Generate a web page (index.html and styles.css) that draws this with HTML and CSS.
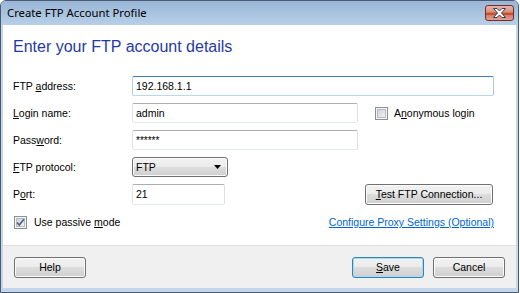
FILE: index.html
```html
<!DOCTYPE html>
<html lang="en">
<head>
<meta charset="utf-8">
<title>Create FTP Account Profile</title>
<link rel="stylesheet" href="styles.css">
</head>
<body>
<div class="window">
  <div class="titlebar">
    <span class="title">Create FTP Account Profile</span>
    <button class="close" aria-label="Close">
      <svg width="29" height="16" viewBox="0 0 29 16">
        <defs>
          <linearGradient id="cg" x1="0" y1="0" x2="0" y2="1">
            <stop offset="0" stop-color="#ebb8ae"/>
            <stop offset="0.45" stop-color="#d98d7f"/>
            <stop offset="0.5" stop-color="#c4502f"/>
            <stop offset="0.62" stop-color="#c4502f"/>
            <stop offset="0.66" stop-color="#d47e6c"/>
            <stop offset="1" stop-color="#e3a599"/>
          </linearGradient>
        </defs>
        <rect x="0.5" y="0.5" width="28" height="15" rx="2.5" fill="url(#cg)" stroke="#71302e"/>
        <path d="M8.5 3.5 H12 L14.5 6 L17 3.5 H20.5 L16.5 8 L20.5 12.5 H17 L14.5 10 L12 12.5 H8.5 L12.5 8 Z" fill="#ffffff" stroke="#3b3f55" stroke-width="1" stroke-linejoin="round"/>
      </svg>
    </button>
  </div>
  <div class="client">
    <main class="content">
      <h1 class="heading">Enter your FTP account details</h1>
      <div class="form">
        <label class="lbl">FTP <u>a</u>ddress:</label>
        <div class="ctl"><input class="tb tb-focus tb-address" value="192.168.1.1" readonly></div>

        <label class="lbl"><u>L</u>ogin name:</label>
        <div class="ctl">
          <input class="tb tb-login" value="admin" readonly>
          <span class="check anon">
            <svg class="cb" width="13" height="13" viewBox="0 0 13 13">
              <defs>
                <linearGradient id="cbg" x1="0" y1="0" x2="1" y2="1">
                  <stop offset="0" stop-color="#cbcfd5"/>
                  <stop offset="1" stop-color="#f4f4f4"/>
                </linearGradient>
              </defs>
              <rect x="0.5" y="0.5" width="12" height="12" fill="#f4f4f4" stroke="#8e8f8f"/>
              <rect x="2.5" y="2.5" width="8" height="8" fill="url(#cbg)" stroke="#b8bcc2"/>
            </svg>
            <span>A<u>n</u>onymous login</span>
          </span>
        </div>

        <label class="lbl">Pass<u>w</u>ord:</label>
        <div class="ctl"><input class="tb tb-login tb-pass" value="******" readonly></div>

        <label class="lbl"><u>F</u>TP protocol:</label>
        <div class="ctl">
          <div class="combo">
            <span>FTP</span>
            <svg width="7" height="4" viewBox="0 0 7 4"><path d="M0 0 H7 L3.5 4 Z" fill="#000"/></svg>
          </div>
        </div>

        <label class="lbl">P<u>o</u>rt:</label>
        <div class="ctl">
          <input class="tb tb-port" value="21" readonly>
          <button class="btn btn-test"><u>T</u>est FTP Connection...</button>
        </div>
      </div>
      <div class="options">
        <span class="check">
          <svg class="cb" width="13" height="13" viewBox="0 0 13 13">
            <defs>
              <linearGradient id="cbg2" x1="0" y1="0" x2="1" y2="1">
                <stop offset="0" stop-color="#cbcfd5"/>
                <stop offset="1" stop-color="#f4f4f4"/>
              </linearGradient>
            </defs>
            <rect x="0.5" y="0.5" width="12" height="12" fill="#f4f4f4" stroke="#8e8f8f"/>
            <rect x="2.5" y="2.5" width="8" height="8" fill="url(#cbg2)" stroke="#b8bcc2"/>
            <path d="M3 6.5 L5.2 9 L10 3.2" fill="none" stroke="#4b5f8f" stroke-width="1.6"/>
          </svg>
          <span>Use passive <u>m</u>ode</span>
        </span>
        <a class="link" href="#">Configure Proxy Settings (Optional)</a>
      </div>
    </main>
    <footer class="footer">
      <button class="btn">Help</button>
      <span class="spacer"></span>
      <button class="btn btn-default"><u>S</u>ave</button>
      <button class="btn">Cancel</button>
    </footer>
  </div>
</div>
</body>
</html>
```

FILE: styles.css
```css
* { box-sizing: border-box; }

html, body {
  margin: 0;
  padding: 0;
  background: #ffffff;
}

body {
  font-family: "Liberation Sans", Arial, sans-serif;
  font-size: 10.5px;
  color: #000;
}

.window {
  width: 519px;
  height: 293px;
  border: 1px solid #4a5a70;
  border-radius: 6px 6px 0 0;
  background: #c2d6ec;
  padding: 0 2px 4px 2px;
  display: flex;
  flex-direction: column;
  overflow: hidden;
}

.titlebar {
  height: 24px;
  flex: none;
  margin: 0 -2px;
  padding: 0 4px 0 6px;
  display: flex;
  align-items: flex-start;
  background: linear-gradient(#9ab6d6, #b7cfe8);
}

.title {
  font-family: "Noto Sans", "Open Sans", sans-serif;
  font-size: 11.3px;
  line-height: 24px;
  color: #000;
}

.close {
  margin-left: auto;
  margin-top: 4px;
  padding: 0;
  border: 0;
  background: none;
  width: 29px;
  height: 16px;
  display: block;
}
.close svg { display: block; }

.client {
  flex: 1;
  background: #ffffff;
  display: flex;
  flex-direction: column;
}

.content {
  flex: 1;
  padding: 12px 22px 0 10px;
}

.heading {
  margin: 0 0 19px 0;
  font-family: "Liberation Sans", Arial, sans-serif;
  font-weight: normal;
  font-size: 16px;
  line-height: 20px;
  color: #1f3aa8;
}

.form {
  display: grid;
  grid-template-columns: 119px 1fr;
  grid-auto-rows: 20px;
  row-gap: 7px;
}

.lbl {
  align-self: center;
  line-height: 14px;
}

.ctl {
  display: flex;
  align-items: center;
}

.tb {
  height: 20px;
  border: 1px solid;
  border-color: #abadb3 #dbdfe6 #e3e9ef #e2e3ea;
  border-radius: 2px;
  padding: 0 3px;
  font-family: "Liberation Sans", Arial, sans-serif;
  font-size: 10.5px;
  color: #000;
  background: #fff;
  outline: none;
  margin: 0;
}

.tb-focus {
  border-color: #3d7bad #a4c9e3 #b7d9ed #b5cfe7;
}

.tb-address { width: 362px; }
.tb-login { width: 226px; }
.tb-port { width: 93px; height: 21px; }
.tb-pass { font-size: 10px; }

.check {
  display: inline-flex;
  align-items: center;
  gap: 6px;
}
.cb { display: block; flex: none; }

.anon { margin-left: 17px; }

.combo {
  width: 96px;
  height: 20px;
  border: 1px solid #707070;
  border-radius: 3px;
  background: linear-gradient(#f2f2f2 0%, #ebebeb 50%, #dddddd 50%, #cfcfcf 100%);
  box-shadow: inset 0 0 0 1px #fbfbfb;
  display: flex;
  align-items: center;
  justify-content: space-between;
  padding: 0 6px 0 3px;
}

.btn {
  width: 72px;
  height: 21px;
  margin: 0;
  padding: 0;
  border: 1px solid #707070;
  border-radius: 3px;
  background: linear-gradient(#f2f2f2 0%, #ebebeb 50%, #dddddd 50%, #cfcfcf 100%);
  box-shadow: inset 0 0 0 1px #fbfbfb;
  font-family: "Liberation Sans", Arial, sans-serif;
  font-size: 10.5px;
  color: #000;
  line-height: 19px;
  text-align: center;
}

.btn-test {
  width: 128px;
  margin-left: auto;
  margin-right: 1px;
}

.btn-default {
  border-color: #3c7fb1;
  box-shadow: inset 0 0 0 1px #9fe0f8;
}

.options {
  margin-top: 8px;
  height: 20px;
  display: flex;
  align-items: center;
  justify-content: space-between;
  padding-left: 1px;
}
.options .check { gap: 7px; }

.link {
  color: #0066cc;
  text-decoration: underline;
}

.footer {
  flex: none;
  height: 43px;
  border-top: 1px solid #dfdfdf;
  background: #f0f0f0;
  display: flex;
  align-items: flex-start;
  gap: 9px;
  padding: 11px 11px 0 11px;
}

.spacer { flex: 1; }
```
